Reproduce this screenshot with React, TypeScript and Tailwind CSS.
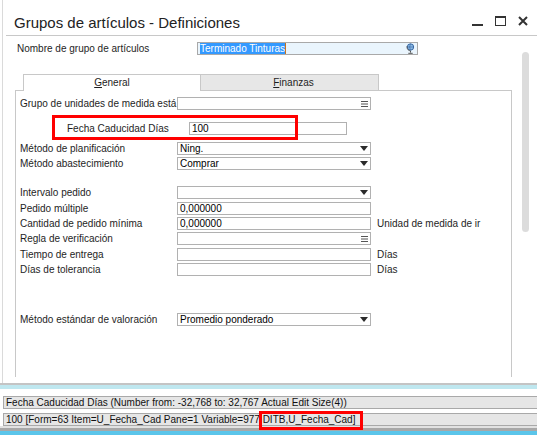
import type { ReactNode } from "react";

const font = "font-['Liberation_Sans',Arial,sans-serif]";

function Arrow() {
  return (
    <svg width="8" height="5" viewBox="0 0 8 5" className="mr-[2px]">
      <polygon points="0,0 8,0 4,5" fill="#2b2b2b" />
    </svg>
  );
}

function Lines() {
  return (
    <svg width="7" height="6" viewBox="0 0 7 6" className="mr-[2px]">
      <rect x="0" y="0" width="7" height="1" fill="#555" />
      <rect x="0" y="2.5" width="7" height="1" fill="#555" />
      <rect x="0" y="5" width="7" height="1" fill="#555" />
    </svg>
  );
}

function Box({
  value,
  icon,
  className = "w-[194px]",
}: {
  value?: string;
  icon?: ReactNode;
  className?: string;
}) {
  return (
    <div
      className={`${className} h-[13px] border border-[#b1b1b1] bg-white flex items-center justify-between pl-[2px] text-[10px] leading-[11px] text-black`}
    >
      <span>{value}</span>
      {icon}
    </div>
  );
}

function Row({
  label,
  mt,
  children,
  after,
}: {
  label: string;
  mt: string;
  children: ReactNode;
  after?: string;
}) {
  return (
    <div className={`flex items-center h-[13px] ${mt}`}>
      <div className="w-[161px] pl-[4px] text-[10px] leading-[13px] text-[#1e1e1e] whitespace-nowrap">
        {label}
      </div>
      {children}
      {after && (
        <span className="ml-[6px] text-[10px] leading-[13px] text-[#1e1e1e] whitespace-nowrap">
          {after}
        </span>
      )}
    </div>
  );
}

export default function App() {
  return (
    <div className={`w-[537px] h-[435px] overflow-hidden bg-white flex flex-col ${font}`}>
      {/* ── Window ── */}
      <div className="ml-[2px] border-l border-[#dadada]">
        {/* Title bar */}
        <div className="h-[35px] flex justify-between">
          <div className="pl-[11px] pt-[15px] text-[15px] leading-[15px] text-[#222] whitespace-nowrap">
            Grupos de artículos - Definiciones
          </div>
          <div className="flex items-start pt-[16px] pr-[9px] gap-[12px]">
            <svg width="11" height="10" viewBox="0 0 11 10">
              <rect x="0" y="8" width="11" height="2" fill="#333" />
            </svg>
            <svg width="11" height="10" viewBox="0 0 11 10">
              <rect x="0.5" y="0.5" width="10" height="9" fill="none" stroke="#333" />
              <rect x="0" y="0" width="11" height="2" fill="#333" />
            </svg>
            <svg width="10" height="10" viewBox="0 0 10 10">
              <path d="M1 1 L9 9 M9 1 L1 9" stroke="#333" strokeWidth="2" />
            </svg>
          </div>
        </div>
        <div className="ml-[3px] h-px bg-[#c8c8c8]" />

        {/* Main area */}
        <div className="h-[347px] flex">
          <div className="w-[512px] flex flex-col">
            {/* Name row */}
            <div className="mt-[6px] flex items-center h-[13px] pl-[14px]">
              <div className="w-[180px] text-[10px] leading-[13px] text-[#1e1e1e] whitespace-nowrap">
                Nombre de grupo de artículos
              </div>
              <div className="w-[221px] h-[13px] border border-[#a9a9a9] bg-[#eaf5fd] flex items-center justify-between pl-[2px]">
                <div className="flex items-center h-[11px]">
                  <span className="bg-[#3399ff] text-white text-[10px] leading-[11px] whitespace-nowrap">
                    Terminado Tinturas
                  </span>
                  <span className="w-px h-[11px] bg-[#c8751e]" />
                </div>
                <svg width="9" height="11" viewBox="0 0 9 11" className="mr-[2px]">
                  <circle cx="4.5" cy="4" r="3.2" fill="#8dbbe6" stroke="#2e5d9a" strokeWidth="0.9" />
                  <path d="M4.5 0.8 Q2.8 4 4.5 7.2 M1.4 4 H7.6" stroke="#2e5d9a" strokeWidth="0.6" fill="none" />
                  <path d="M0.8 3.2 Q1 7.6 4.5 7.9" stroke="#555" strokeWidth="0.8" fill="none" />
                  <path d="M4.5 7.9 V9.6 M2.3 10.3 H6.7" stroke="#555" strokeWidth="1" />
                </svg>
              </div>
            </div>

            {/* Tabs */}
            <div className="mt-[19px] ml-[20px] flex h-[17px] relative z-10 -mb-px text-[10px] leading-[16px] text-[#1e1e1e]">
              <div className="w-[178px] bg-white border-l border-t border-r border-[#c8c8c8] text-center">
                <span className="underline">G</span>eneral
              </div>
              <div className="w-[178px] bg-[#e7e7e7] border-t border-r border-b border-[#c8c8c8] text-center pl-[8px]">
                <span className="underline">F</span>inanzas
              </div>
            </div>

            {/* Tab panel */}
            <div className="ml-[12px] w-[497px] h-[287px] border-l border-t border-r border-[#c8c8c8] relative flex flex-col">
              <Row label="Grupo de unidades de medida está" mt="mt-[6px]">
                <Box icon={<Lines />} />
              </Row>

              <div className="flex items-center h-[13px] mt-[12px]">
                <div className="w-[173px] pl-[51px] text-[10px] leading-[13px] text-[#1e1e1e] whitespace-nowrap">
                  Fecha Caducidad Días
                </div>
                <Box value="100" className="w-[158px]" />
              </div>

              <Row label="Método de planificación" mt="mt-[7px]">
                <Box value="Ning." icon={<Arrow />} />
              </Row>
              <Row label="Método abastecimiento" mt="mt-[2px]">
                <Box value="Comprar" icon={<Arrow />} />
              </Row>

              <Row label="Intervalo pedido" mt="mt-[16px]">
                <Box icon={<Arrow />} />
              </Row>
              <Row label="Pedido múltiple" mt="mt-[3px]">
                <Box value="0,000000" />
              </Row>
              <Row label="Cantidad de pedido mínima" mt="mt-[2px]" after="Unidad de medida de ir">
                <Box value="0,000000" />
              </Row>
              <Row label="Regla de verificación" mt="mt-[2px]">
                <Box icon={<Lines />} />
              </Row>
              <Row label="Tiempo de entrega" mt="mt-[3px]" after="Días">
                <Box />
              </Row>
              <Row label="Días de tolerancia" mt="mt-[2px]" after="Días">
                <Box />
              </Row>

              <Row label="Método estándar de valoración" mt="mt-[37px]">
                <Box value="Promedio ponderado" icon={<Arrow />} />
              </Row>

              {/* annotation */}
              <div className="absolute left-[36px] top-[24px] w-[246px] h-[25px] border-[3px] border-[#ff0000]" />
            </div>
          </div>

          {/* Scrollbar */}
          <div className="ml-[7px] mt-[16px] w-[7px] h-[180px] rounded-full bg-[#dcdcdc]" />
        </div>
      </div>

      {/* ── Status area ── */}
      <div className="h-[2px] bg-[#c4c4c4]" />
      <div className="h-[4px] bg-[#bfe7ef]" />
      <div className="h-[7px] bg-white" />
      <div className="ml-[3px] h-[13px] border-t border-b border-l border-[#a9a9a9] bg-[#e6e6e6] pl-[2px] text-[10px] leading-[11px] text-[#111] whitespace-nowrap">
        Fecha Caducidad Días (Number from: -32,768 to: 32,767 Actual Edit Size(4))
      </div>
      <div className="h-[4px] bg-white" />
      <div className="relative ml-[3px] h-[13px] border-t border-b border-l border-[#a9a9a9] bg-[#e6e6e6] pl-[2px] text-[10px] leading-[11px] text-[#111] whitespace-nowrap">
        100 [Form=63 Item=U_Fecha_Cad Pane=1 Variable=977 DITB,U_Fecha_Cad]
        <div className="absolute left-[255px] top-[-3px] w-[104px] h-[19px] border-[3px] border-[#ff0000]" />
      </div>
      <div className="h-[2px] bg-[#e2e2e2]" />
      <div className="h-[3px] bg-[#a8a8a8]" />
      <div className="h-[4px] bg-[#5bc5ea]" />
    </div>
  );
}
